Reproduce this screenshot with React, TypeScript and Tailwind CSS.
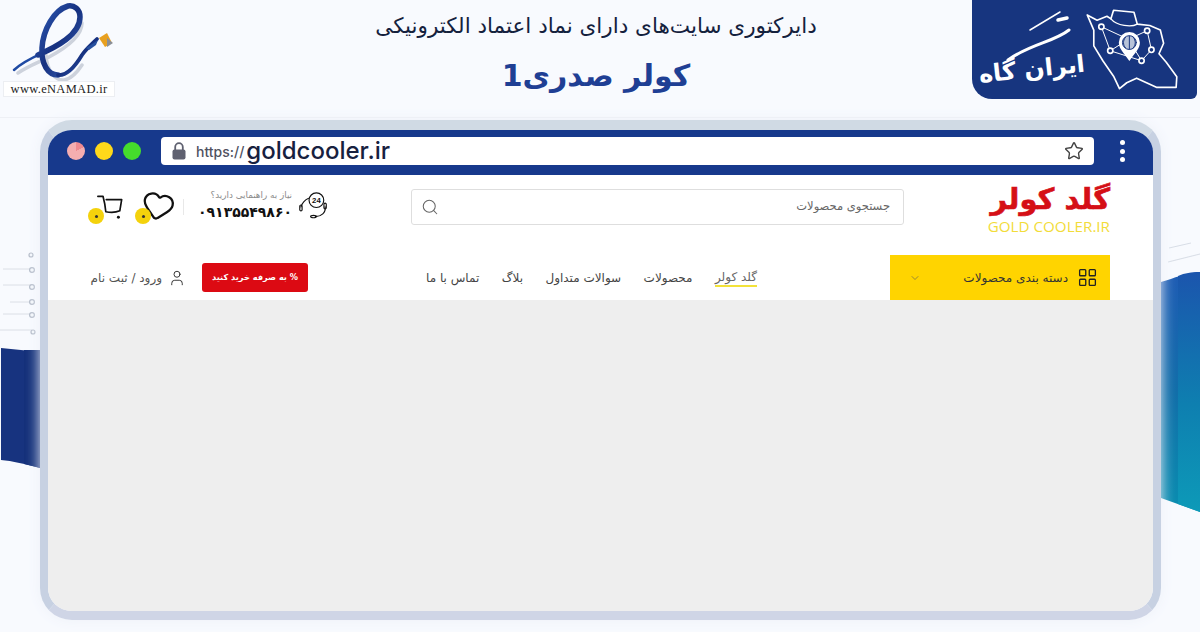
import { ChevronDown, Heart, LayoutGrid, Search, Star, User } from "lucide-react";

const FA = "font-['DejaVu_Sans',sans-serif]";

function Enamad() {
  return (
    <div className="flex w-[118px] flex-col items-center">
      <svg width="116" height="79" viewBox="-1 -1 116 79" className="mt-[2px]" fill="none" strokeLinecap="round">
        <defs>
          <linearGradient id="eg" x1="0" y1="0" x2="1" y2="1">
            <stop offset="0" stopColor="#2f5cb8" />
            <stop offset="0.5" stopColor="#16307f" />
            <stop offset="1" stopColor="#3a66bd" />
          </linearGradient>
        </defs>
        <path d="M16 70 C28 62 38 59 47 54 C62 46 80 34 80 20 M44 52 C45 66 52 78 62 77 C70 76 76 68 80 62" stroke="#cdd2dc" strokeWidth="3.5" />
        <path d="M12 67 C22 58 32 54 43 49" stroke="#1f4aa3" strokeWidth="2.5" />
        <path d="M36 52 C54 44 78 32 78 14 C78 6 72 2 66 3 C52 7 41 27 40 45 C39 61 46 72 56 72" stroke="url(#eg)" strokeWidth="5.5" />
        <path d="M56 72 C66 73 74 62 80 52 C84 46 89 42 95 36" stroke="url(#eg)" strokeWidth="3.8" />
        <path d="M84 45 L96 37 L94 42 L87 47 Z" fill="#27509f" />
        <path d="M97 35 L105 30 L110 40 L103 44 Z" fill="#e8a020" />
        <path d="M105 35 L111 40 L105 44 Z" fill="#8a8f98" />
      </svg>
      <div className="mt-[0px] flex h-[16px] w-[112px] items-center justify-center border border-[#eceef2] bg-white font-['Liberation_Serif',serif] text-[12.5px] tracking-[0.3px] text-[#222]">
        www.eNAMAD.ir
      </div>
    </div>
  );
}

function IranMap() {
  return (
    <svg width="94" height="83" viewBox="405 22 282 252" fill="none" stroke="#fff" strokeWidth="5" strokeLinejoin="round" strokeLinecap="round">
      <path d="M410 46 L440 62 L470 50 L482 58 L490 32 L552 38 L562 74 L600 78 L632 92 L642 132 L628 164 L650 190 L682 234 L680 266 L620 266 L590 252 L560 238 L530 252 L508 270 L490 232 L458 186 L430 140 L430 92 Z" />
      <path d="M482 58 C500 80 545 84 562 74" strokeWidth="4" />
      <path d="M453 82 L535 120 M535 120 L592 94 M592 94 L605 152 L575 185 L535 120 L480 155 L453 82 M480 155 L575 185" strokeWidth="3" />
      <circle cx="453" cy="82" r="8" fill="#17357f" />
      <circle cx="592" cy="94" r="8" fill="#17357f" />
      <circle cx="605" cy="152" r="8" fill="#17357f" />
      <circle cx="480" cy="155" r="8" fill="#17357f" />
      <circle cx="575" cy="185" r="8" fill="#17357f" />
      <path d="M538 186 C520 160 506 148 506 130 A32 32 0 0 1 570 130 C570 148 556 160 538 186 Z" fill="#fff" stroke="none" />
      <circle cx="538" cy="130" r="21" fill="#b8c3d8" stroke="#17357f" strokeWidth="3" />
      <path d="M538 110 V150 M526 114 C518 125 518 136 526 146 M550 114 C558 125 558 136 550 146" stroke="#17357f" strokeWidth="3" />
    </svg>
  );
}

function Badge() {
  return (
    <div className="relative mr-[3px] flex h-[99px] w-[225px] items-center rounded-bl-[20px] rounded-br-[6px] bg-[#17357f] pl-[10px]">
      <div dir="rtl" className="mt-[38px] w-[103px] -rotate-[6deg] whitespace-nowrap text-center text-[24px] leading-none font-bold text-white">
        ایران گاه
      </div>
      <div className="mt-[-2px]">
        <IranMap />
      </div>
      <svg className="absolute left-0 top-0" width="110" height="70" viewBox="0 0 110 70" fill="none" stroke="#fff" strokeLinecap="round">
        <path d="M58 30 L88 12" strokeWidth="1.5" />
        <path d="M36 60 C58 44 82 42 97 30" strokeWidth="3" />
        <path d="M86 20 L95 18" strokeWidth="3.5" />
      </svg>
    </div>
  );
}

function Headset() {
  return (
    <svg width="29" height="30" viewBox="0 0 30 30" fill="none" stroke="#111" strokeWidth="1.2" strokeLinecap="round">
      <circle cx="18" cy="10" r="7.6" />
      <text x="18" y="13" textAnchor="middle" fontSize="8" fontWeight="700" fill="#111" stroke="none" fontFamily="Liberation Sans, sans-serif">24</text>
      <path d="M10 8 C5 10 3 14 2 17" />
      <rect x="0.8" y="15" width="2.4" height="6" rx="1.2" />
      <path d="M27 17 C28 23 23 27 17 27" />
      <rect x="25.8" y="13" width="2.4" height="6" rx="1.2" />
      <ellipse cx="15" cy="27" rx="3" ry="1.2" />
    </svg>
  );
}

function Cart() {
  return (
    <svg width="28" height="28" viewBox="0 0 30 28" fill="none" stroke="#111" strokeWidth="1.8" strokeLinecap="round" strokeLinejoin="round">
      <path d="M2 1.5 H7.5 C9 7 10 12 10.5 18 C16 19 22 18.5 25.5 17 L27.5 5 H11" />
      <circle cx="24" cy="24" r="1.6" fill="#111" stroke="none" />
    </svg>
  );
}

function IconDot() {
  return (
    <span className="absolute flex h-[16px] w-[16px] items-center justify-center rounded-full bg-[#f4d20c]">
      <span className="h-[3px] w-[3px] rounded-full bg-[#333]" />
    </span>
  );
}

function Lock() {
  return (
    <svg width="14" height="18" viewBox="0 0 14 18" className="shrink-0">
      <path d="M3.2 8 V5 A3.8 3.8 0 0 1 10.8 5 V8" fill="none" stroke="#5f6170" strokeWidth="1.8" />
      <rect x="0.5" y="7.5" width="13" height="10" rx="2" fill="#5f6170" />
    </svg>
  );
}

function SideDeco() {
  return (
    <>
      <svg className="absolute left-0 top-[240px]" width="40" height="232" viewBox="0 0 40 232" fill="none">
        <g stroke="#d3d8e1" strokeWidth="0.8">
          <path d="M3 29 H31 M3 45 H31 M10 62 H31 M3 74 H31 M0 90 H32" />
        </g>
        <g fill="#f4f7fb" stroke="#b4bbc8" strokeWidth="1.2">
          <circle cx="31" cy="15" r="2" />
          <circle cx="32" cy="30" r="2.4" />
          <circle cx="32" cy="47" r="2.4" />
          <circle cx="32" cy="62" r="2.4" />
          <circle cx="32" cy="75" r="2.4" />
          <circle cx="33" cy="92" r="2" />
        </g>
        <path d="M1 108 C14 109 28 111 40 112 V228 C26 224 12 221 1 220 Z" fill="#17337f" />
        <path d="M24 110 H40 V228 L24 224 Z" fill="#14307a" />
      </svg>
      <svg className="absolute right-0 top-[240px]" width="39" height="275" viewBox="0 0 39 275" fill="none">
        <defs>
          <linearGradient id="rg" x1="0" y1="0" x2="0" y2="1">
            <stop offset="0" stopColor="#1f5cb4" />
            <stop offset="0.5" stopColor="#126ea9" />
            <stop offset="1" stopColor="#0a8eb0" />
          </linearGradient>
          <linearGradient id="rh" x1="0" y1="0" x2="0" y2="1">
            <stop offset="0" stopColor="#1b55ad" />
            <stop offset="0.55" stopColor="#0e7fb0" />
            <stop offset="1" stopColor="#0d9ab8" />
          </linearGradient>
        </defs>
        <path d="M0 42 C14 38 24 33 39 32 V272 L0 258 Z" fill="url(#rg)" />
        <path d="M17 36 C24 33 30 32 39 32 V272 L17 264 Z" fill="url(#rh)" />
        <path d="M8 8 L30 3 M7 22 L39 14" stroke="#cfd5e0" strokeWidth="0.8" />
      </svg>
    </>
  );
}

export default function App() {
  return (
    <div dir="ltr" className={`${FA} relative flex h-[632px] w-[1200px] flex-col overflow-hidden bg-[#f8fafe]`}>
      <SideDeco />
      <header className="flex h-[118px] shrink-0 items-start border-b border-[#eef0f5]">
        <div className="w-[220px]">
          <Enamad />
        </div>
        <div dir="rtl" className="flex h-[100px] w-[752px] flex-col items-center">
          <div className="mt-[8px] text-[21.5px] leading-[36px] text-[#14213d]">دایرکتوری سایت‌های دارای نماد اعتماد الکترونیکی</div>
          <div className="mt-[7px] text-[30px] leading-[50px] font-semibold text-[#1f3f94]">کولر صدری1</div>
        </div>
        <Badge />
      </header>

      <main className="relative ml-[40px] mt-[2px] flex h-[500px] w-[1121px] flex-col overflow-hidden rounded-[32px] border-x-[8px] border-t-[10px] border-b-[9px] border-x-[#c7d1e2] border-t-[#d0dae4] border-b-[#cfd5e6] shadow-[0_0_14px_#edf1f9]">
        <div className="flex h-[45px] shrink-0 items-center bg-[#17398c] pb-[3px] pl-[19px]">
          <div className="flex items-center gap-[10px]">
            <span className="h-[18px] w-[18px] rounded-full bg-[conic-gradient(#f08a90_0_18%,#f5aeb0_18%_100%)]" />
            <span className="h-[18px] w-[18px] rounded-full bg-[#ffd91a]" />
            <span className="h-[18px] w-[18px] rounded-full bg-[#45dc2c]" />
          </div>
          <div className="ml-[20px] flex h-[28px] w-[933px] items-center rounded-[4px] bg-white pl-[11px] pr-[10px] font-['Inter',sans-serif]">
            <Lock />
            <span className="ml-[10px] text-[14px] font-medium text-[#50525f]">https://</span>
            <span className="ml-[2px] text-[24px] font-medium leading-none text-[#17213f]">goldcooler.ir</span>
            <Star size={20} strokeWidth={1.7} className="ml-auto text-[#444]" />
          </div>
          <div className="ml-[26px] flex flex-col gap-[3.5px]">
            <span className="h-[5px] w-[5px] rounded-full bg-white" />
            <span className="h-[5px] w-[5px] rounded-full bg-white" />
            <span className="h-[5px] w-[5px] rounded-full bg-white" />
          </div>
        </div>

        <div className="flex h-[80px] shrink-0 items-center bg-white pb-[16px] pl-[48px]">
          <div className="relative mt-[2px] h-[28px] w-[28px]">
            <Cart />
            <span className="absolute left-[-8px] top-[14px]"><IconDot /></span>
          </div>
          <div className="relative ml-[17px] mt-[-2px] h-[34px] w-[34px]">
            <Heart size={34} strokeWidth={1.6} className="rotate-[12deg] text-[#111]" />
            <span className="absolute left-[-6px] top-[19px]"><IconDot /></span>
          </div>
          <div className="ml-[8px] h-[16px] w-px bg-[#e8e8e8]" />
          <div dir="rtl" className="ml-[17px] mt-[-4px] flex w-[91px] flex-col items-start">
            <div className="whitespace-nowrap text-[8.8px] leading-[14px] text-[#8b8b8b]">نیاز به راهنمایی دارید؟</div>
            <div className="w-full text-center text-[14px] leading-[20px] font-bold whitespace-nowrap text-[#111]">۰۹۱۳۵۵۴۹۸۶۰</div>
          </div>
          <div className="ml-[7px] mt-[-4px]">
            <Headset />
          </div>
          <div className="ml-[83px] flex h-[36px] w-[493px] items-center justify-between rounded-[3px] border border-[#dedede] bg-white pl-[9px] pr-[13px]">
            <Search size={18} strokeWidth={1.4} className="text-[#666]" />
            <span dir="rtl" className="text-[11.5px] text-[#666]">جستجوی محصولات</span>
          </div>
          <div className="ml-[83px] mt-[4px] flex w-[123px] flex-col items-end">
            <div dir="rtl" className="text-[29px] leading-[32px] font-bold tracking-[-0.5px] whitespace-nowrap text-[#d50f16] [-webkit-text-stroke:0.6px_#d50f16]">گلد کولر</div>
            <div className="mt-[2px] font-['Open_Sans',sans-serif] text-[15.2px] leading-[18px] whitespace-nowrap text-[#f2dc3a]">GOLD COOLER.IR</div>
          </div>
        </div>

        <div className="flex h-[45px] shrink-0 items-center bg-white pl-[42px]">
          <div className="flex w-[96px] items-center justify-end gap-[6px]">
            <span dir="rtl" className="text-[12px] whitespace-nowrap text-[#555]">ورود / ثبت نام</span>
            <User size={18} strokeWidth={1.3} className="shrink-0 text-[#333]" />
          </div>
          <div dir="rtl" className="ml-[16px] flex h-[29px] w-[106px] items-center justify-center rounded-[3px] bg-[#dc0a13] text-[8.2px] font-bold whitespace-nowrap text-white">
            % به صرفه خرید کنید
          </div>
          <nav className="ml-[118px] flex w-[331px] items-center justify-between text-[12px] text-[#444]">
            <span dir="rtl">تماس با ما</span>
            <span dir="rtl">بلاگ</span>
            <span dir="rtl">سوالات متداول</span>
            <span dir="rtl">محصولات</span>
            <span dir="rtl" className="border-b-2 border-[#f2e23a] leading-[16px] text-[#666]">گلد کولر</span>
          </nav>
          <div className="ml-[133px] flex h-[45px] w-[220px] items-center bg-[#ffd400] pl-[19px] pr-[12px]">
            <ChevronDown size={12} strokeWidth={1.2} className="text-[#555]" />
            <span dir="rtl" className="ml-auto text-[12px] text-[#333]">دسته بندی محصولات</span>
            <LayoutGrid size={21} strokeWidth={1.5} className="ml-[9px] text-[#222]" />
          </div>
        </div>

        <div className="flex-1 bg-[#eeeeee]" />
      </main>
    </div>
  );
}
